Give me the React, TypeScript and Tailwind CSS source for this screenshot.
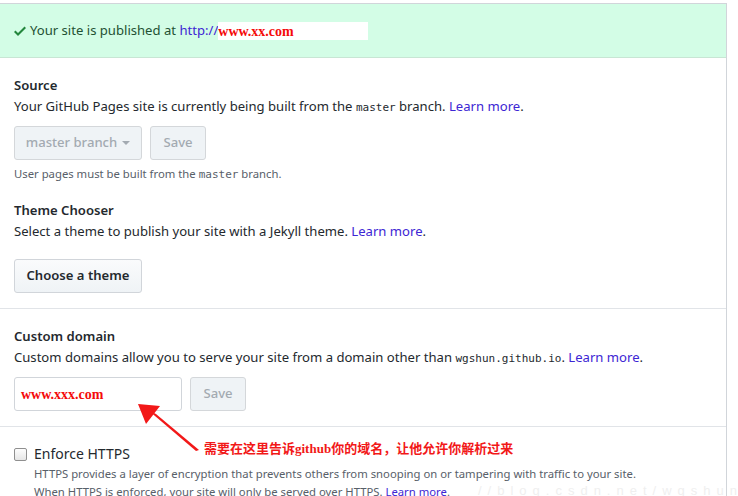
const font = "font-['Noto_Sans','Liberation_Sans',sans-serif]";
const mono = "font-['DejaVu_Sans_Mono','Liberation_Mono',monospace]";
const cjk = "font-['Liberation_Serif','Noto_Sans_CJK_SC',serif]";

const Link = ({ children }: { children: React.ReactNode }) => (
  <span className="text-[#3d26d4]">{children}</span>
);

const Code = ({ children }: { children: React.ReactNode }) => (
  <code className={`${mono} text-[11px] leading-none`}>{children}</code>
);

const DisabledButton = ({ children, w }: { children: React.ReactNode; w: string }) => (
  <div className={`${w} h-[34px] flex items-center justify-center rounded-[3px] border border-[#d4d7da] bg-[#eff3f6] text-[13.1px] text-[#a3aab1] font-medium`}>
    {children}
  </div>
);

const Arrow = () => (
  <svg
    className="absolute left-0 top-0 pointer-events-none"
    width="738"
    height="496"
    viewBox="0 0 738 496"
  >
    <polygon points="138,404 160,406 146,424" fill="#f21818" />
    <polygon points="148,410 156,414 199,450 196,451" fill="#f21818" />
  </svg>
);

export default function App() {
  return (
    <div className={`relative w-[738px] h-[496px] overflow-hidden bg-white ${font} text-[#24292e]`}>
      <div className="mt-[3px] w-[727px] border-t border-r border-[#d1d5da]">
        {/* flash */}
        <div className="h-[54px] bg-[#d3fde6] border-b border-[#c8e6d4] flex items-center pl-[14px] text-[13.1px] text-[#1f5133]">
          <svg width="12" height="16" viewBox="0 0 12 16" className="mr-[4px] mt-[1px]">
            <path d="M12 5l-8 8-4-4 1.5-1.5L4 10l6.5-6.5L12 5z" fill="#23863d" />
          </svg>
          <span>Your site is published at&nbsp;</span>
          <Link>http://</Link>
          <span className={`inline-block w-[150px] h-[18px] bg-white text-[#f40b0b] text-[14px] font-bold leading-[20px] ${cjk}`}>
            www.xx.com
          </span>
        </div>

        {/* source + theme */}
        <div className="pt-[17px] pb-[15px] px-[14px] border-b border-[#e1e4e8]">
          <div className="text-[13.1px] leading-[21px] font-semibold">Source</div>
          <div className="text-[13.1px] leading-[21px]">
            Your GitHub Pages site is currently being built from the <Code>master</Code> branch.{" "}
            <Link>Learn more</Link>.
          </div>
          <div className="mt-[9px] flex gap-[8px]">
            <DisabledButton w="w-[128px]">
              master branch
              <span className="ml-[5px] w-0 h-0 border-x-[4px] border-x-transparent border-t-[4px] border-t-[#a3aab1]" />
            </DisabledButton>
            <DisabledButton w="w-[56px]">Save</DisabledButton>
          </div>
          <div className="mt-[5px] text-[11.3px] leading-[18px] text-[#586069]">
            User pages must be built from the <Code>master</Code> branch.
          </div>

          <div className="mt-[17px] text-[13.1px] leading-[21px] font-semibold">Theme Chooser</div>
          <div className="text-[13.1px] leading-[21px]">
            Select a theme to publish your site with a Jekyll theme. <Link>Learn more</Link>.
          </div>
          <div className="mt-[17px] flex">
            <div className="h-[34px] w-[128px] flex items-center justify-center rounded-[3px] border border-[#d1d5da] bg-gradient-to-b from-[#fafbfc] to-[#eff3f6] text-[13.1px] font-semibold">
              Choose a theme
            </div>
          </div>
        </div>

        {/* custom domain */}
        <div className="pt-[17px] pb-[15px] px-[14px] border-b border-[#e1e4e8]">
          <div className="text-[13.1px] leading-[21px] font-semibold">Custom domain</div>
          <div className="text-[13.1px] leading-[21px]">
            Custom domains allow you to serve your site from a domain other than{" "}
            <Code>wgshun.github.io</Code>. <Link>Learn more</Link>.
          </div>
          <div className="mt-[9px] flex gap-[8px]">
            <div className="h-[34px] w-[168px] flex items-center px-[6px] rounded-[3px] border border-[#d1d5da] bg-white">
              <span className={`${cjk} text-[14px] font-bold text-[#f40b0b]`}>www.xxx.com</span>
            </div>
            <DisabledButton w="w-[56px]">Save</DisabledButton>
          </div>
        </div>

        {/* https */}
        <div className="pt-[16px] px-[14px]">
          <div className="flex items-center gap-[7px]">
            <div className="w-[13px] h-[13px] rounded-[2px] border border-[#8f8f8f] bg-gradient-to-b from-[#fdfdfd] to-[#e6e6e6]" />
            <span className="text-[14px] leading-[22px]">Enforce HTTPS</span>
          </div>
          <div className="pl-[20px] text-[11.3px] leading-[18px] text-[#586069]">
            <div>HTTPS provides a layer of encryption that prevents others from snooping on or tampering with traffic to your site.</div>
            <div>
              When HTTPS is enforced, your site will only be served over HTTPS. <Link>Learn more</Link>.
            </div>
          </div>
        </div>
      </div>

      {/* annotation */}
      <Arrow />
      <div className={`absolute left-[204px] top-[439px] text-[13px] leading-[20px] font-bold text-[#f21818] ${cjk}`}>
        需要在这里告诉github你的域名，让他允许你解析过来
      </div>
      <div className="absolute left-[478px] top-[484px] text-[13px] leading-[14px] tracking-[6px] text-[#efefef] font-['Liberation_Sans',sans-serif]">
        //blog.csdn.net/wgshun
      </div>
    </div>
  );
}
